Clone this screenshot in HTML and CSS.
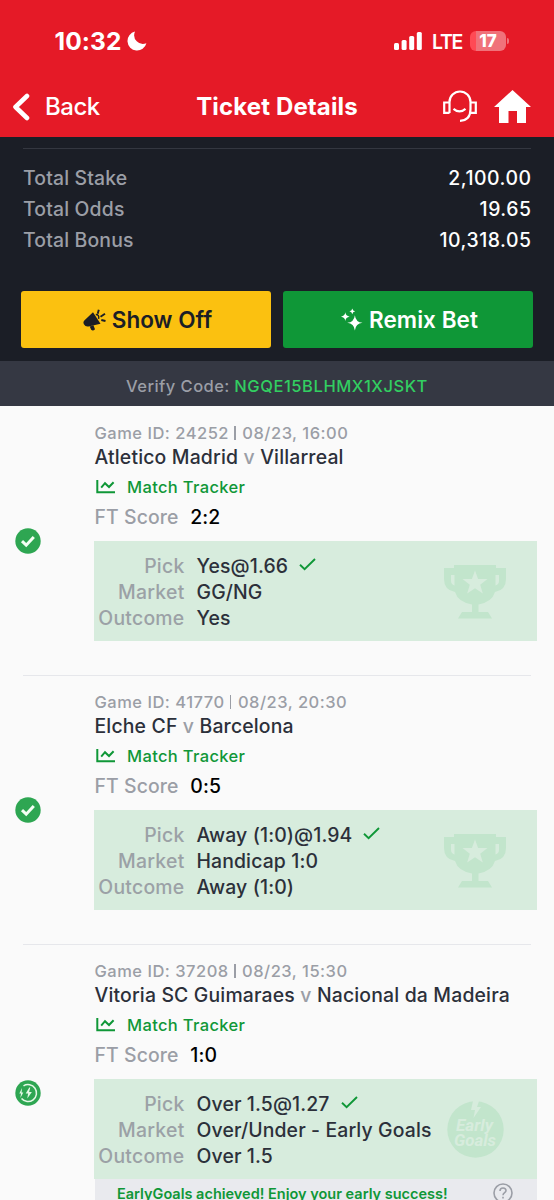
FILE: index.html
```html
<!DOCTYPE html>
<html lang="en">
<head>
<meta charset="utf-8">
<title>Ticket Details</title>
<link rel="stylesheet" href="styles.css">
</head>
<body>
<svg class="defs" aria-hidden="true">
  <symbol id="trophy" viewBox="0 0 62 54">
    <path fill-rule="evenodd" d="M10 0H52V3H62V14Q62 25 51 27Q48 37 34.500 39.500V47H44L48 53.500H14L18 47H28V39.500Q14 37 11 27Q0 25 0 14V3H10ZM7 10V16Q7 19 10.500 20.500V10ZM55 10H51.500V20.500Q55 19 55 16ZM31 5.500L27.900 14H18.500L25.800 19.700L23.200 28.500L31 23.300L38.800 28.500L36.200 19.700L43.500 14H34.100Z"/>
  </symbol>
  <symbol id="chart" viewBox="0 0 20 14">
    <path d="M1.300 0V12.300H19M5.200 7.600L9 3.200L13 7L17.600 2.200" fill="none" stroke="currentColor" stroke-width="2"/>
  </symbol>
  <symbol id="tick" viewBox="0 0 17 13">
    <path d="M1 6.800L5.600 11.200L16 1" fill="none" stroke="currentColor" stroke-width="1.900"/>
  </symbol>
  <symbol id="won" viewBox="0 0 26 26">
    <circle cx="13" cy="13" r="12.700" fill="#2ea652"/>
    <path d="M7 13.200L11.200 17.200L18.800 9" fill="none" stroke="#f4fff4" stroke-width="3"/>
  </symbol>
</svg>

<header class="header">
  <div class="status">
    <div class="clock"><span class="time">10:32</span>
      <svg class="moon" viewBox="0 0 20 20"><path d="M8 .6A9.600 9.600 0 1 0 19.400 12.300A8.800 8.800 0 0 1 8 .6Z" fill="#fff"/></svg>
    </div>
    <div class="signals">
      <svg class="bars" viewBox="0 0 28 18" fill="#fff"><rect y="11" width="5" height="7" rx="1.500"/><rect x="7.600" y="8" width="5" height="10" rx="1.500"/><rect x="15.200" y="4" width="5" height="14" rx="1.500"/><rect x="22.800" width="5" height="18" rx="1.500"/></svg>
      <span class="lte">LTE</span>
      <span class="battery">17</span><i class="nub"></i>
    </div>
  </div>
  <nav class="nav">
    <div class="back">
      <svg class="chevron" viewBox="0 0 18 28"><path d="M15 3L3.500 14L15 25" fill="none" stroke="#fff" stroke-width="4.600" stroke-linecap="round" stroke-linejoin="round"/></svg>
      <span class="back-text">Back</span>
    </div>
    <h1 class="title"><span>Ticket Details</span></h1>
    <div class="actions">
      <svg class="headset" viewBox="0 0 34 33" fill="none" stroke="#fff" stroke-width="2.200"><path d="M6.500 23V12A10.500 10.500 0 0 1 27.500 12V19C27.500 26 24 30.500 17 30.800M6.500 12.500H1.200V22.800H6.500M27.500 12.500H32.800V22.800H27.500M10.500 18.800Q16.500 24 22.500 18.800"/></svg>
      <svg class="home" viewBox="0 0 37 33"><path d="M18.500 0L37 17H32V33H23V21H14.500V33H5V17H0Z" fill="#fff"/></svg>
    </div>
  </nav>
</header>

<section class="summary">
  <dl class="totals">
    <div class="total"><dt>Total Stake</dt><dd>2,100.00</dd></div>
    <div class="total"><dt>Total Odds</dt><dd>19.65</dd></div>
    <div class="total"><dt>Total Bonus</dt><dd>10,318.05</dd></div>
  </dl>
  <div class="buttons">
    <button class="btn btn-show">
      <svg class="horn" viewBox="0 0 23 22" fill="#1b1e26"><path d="M10 3.200L17.500 14.700L5.500 17.400Q2.500 18 .9 15.300Q-.4 12.800 1.800 11ZM6.700 17.500L10.500 16.600L12 20.200Q10 22.600 8.200 20.800Z"/><path d="M14.700 4.800L15.800.8M17.500 7.800L22 4.800M18.300 11L22.500 12" fill="none" stroke="#1b1e26" stroke-width="1.900"/><path d="M12.800 5.500Q16.500 5.500 15.600 9.800" fill="none" stroke="#1b1e26" stroke-width="1.500"/></svg>
      <span>Show Off</span>
    </button>
    <button class="btn btn-remix">
      <svg class="sparkle" viewBox="0 0 23 23" fill="#fff"><path d="M14.500 7Q15.300 14.200 22.500 15Q15.300 15.800 14.500 23Q13.700 15.800 6.500 15Q13.700 14.200 14.500 7ZM4.500 4Q5 8 9 8.500Q5 9 4.500 13Q4 9 0 8.500Q4 8 4.500 4ZM11.800 0Q12.200 2.600 14.800 3Q12.200 3.400 11.800 6Q11.400 3.400 8.800 3Q11.400 2.600 11.800 0Z"/></svg>
      <span>Remix Bet</span>
    </button>
  </div>
</section>

<div class="verify"><span class="verify-label">Verify Code:</span><span class="verify-code">NGQE15BLHMX1XJSKT</span></div>

<main class="matches">
  <article class="match">
    <svg class="state"><use href="#won"/></svg>
    <div class="info">
      <p class="game">Game ID: 24252 <i class="bar"></i> 08/23, 16:00</p>
      <h2 class="teams">Atletico Madrid <span class="v">v</span> Villarreal</h2>
      <p class="tracker"><svg class="chart"><use href="#chart"/></svg>Match Tracker</p>
      <p class="score">FT Score <b>2:2</b></p>
      <div class="pick">
        <dl class="rows">
          <dt>Pick</dt><dd>Yes@1.66<svg class="tick"><use href="#tick"/></svg></dd>
          <dt>Market</dt><dd>GG/NG</dd>
          <dt>Outcome</dt><dd>Yes</dd>
        </dl>
        <svg class="trophy"><use href="#trophy"/></svg>
      </div>
    </div>
  </article>

  <article class="match">
    <svg class="state"><use href="#won"/></svg>
    <div class="info">
      <p class="game">Game ID: 41770 <i class="bar"></i> 08/23, 20:30</p>
      <h2 class="teams">Elche CF <span class="v">v</span> Barcelona</h2>
      <p class="tracker"><svg class="chart"><use href="#chart"/></svg>Match Tracker</p>
      <p class="score">FT Score <b>0:5</b></p>
      <div class="pick">
        <dl class="rows">
          <dt>Pick</dt><dd>Away (1:0)@1.94<svg class="tick"><use href="#tick"/></svg></dd>
          <dt>Market</dt><dd>Handicap 1:0</dd>
          <dt>Outcome</dt><dd>Away (1:0)</dd>
        </dl>
        <svg class="trophy"><use href="#trophy"/></svg>
      </div>
    </div>
  </article>

  <article class="match">
    <svg class="state state-early" viewBox="0 0 26 26">
      <circle cx="13" cy="13" r="12.700" fill="#2ea652"/>
      <path d="M8.500 5.900A8.500 8.500 0 1 1 6.500 18.600" fill="none" stroke="#e4f8e6" stroke-width="1.500"/>
      <path d="M14.300 7.500L10.700 13.600H13.100L12.300 18.500L16.900 11.900H14.100L15.300 7.500ZM7 8L4.300 13.600H6L5.400 18L8.300 12.500H6.600Z" fill="#e4f8e6"/>
    </svg>
    <div class="info">
      <p class="game">Game ID: 37208 <i class="bar"></i> 08/23, 15:30</p>
      <h2 class="teams">Vitoria SC Guimaraes <span class="v">v</span> Nacional da Madeira</h2>
      <p class="tracker"><svg class="chart"><use href="#chart"/></svg>Match Tracker</p>
      <p class="score">FT Score <b>1:0</b></p>
      <div class="pick">
        <dl class="rows">
          <dt>Pick</dt><dd>Over 1.5@1.27<svg class="tick"><use href="#tick"/></svg></dd>
          <dt>Market</dt><dd>Over/Under - Early Goals</dd>
          <dt>Outcome</dt><dd>Over 1.5</dd>
        </dl>
        <svg class="early" viewBox="0 0 57 57">
          <circle cx="28.500" cy="28.500" r="28.200" fill="#c2e5cc"/>
          <path d="M26 0L24 9H28L26.500 17L34 6H30L32 0Z" fill="#d7ecdd"/>
          <text x="9" y="29.500" class="early-text" textLength="37" lengthAdjust="spacingAndGlyphs">Early</text>
          <text x="7" y="45" class="early-text" textLength="42" lengthAdjust="spacingAndGlyphs">Goals</text>
        </svg>
      </div>
      <div class="notice"><span>EarlyGoals achieved! Enjoy your early success!</span>
        <svg class="help" viewBox="0 0 20 20" fill="none" stroke="#9b9ea6" stroke-width="1.600"><circle cx="10" cy="10" r="9"/><path d="M7 8Q7 5 10 5T13 7.800C13 9.700 10 9.800 10 12.200M10 13.800V15.600"/></svg>
      </div>
    </div>
  </article>
</main>
</body>
</html>
```
FILE: styles.css
```css
* { box-sizing: border-box; margin: 0; padding: 0; }
html, body { height: 1200px; overflow: hidden; }
body { font-family: Inter, "Liberation Sans", sans-serif; background: #fafafa; color: #2c303a; white-space: nowrap; font-weight: 500; }
svg { display: block; flex: none; }
.defs { width: 0; height: 0; position: absolute; }

.header { height: 137px; background: #e51a27; color: #fff; }
.status { height: 76px; padding: 26px 44px 0 54.500px; display: flex; justify-content: space-between; }
.clock, .signals { height: 30px; display: flex; align-items: center; }
.time { width: 68px; font-size: 24.500px; line-height: 28px; font-weight: 700; letter-spacing: 0.1px; }
.moon { width: 20px; height: 20px; margin: 0 0 0 4px; }
.bars { width: 28px; height: 18px; }
.lte { width: 30px; margin: 1px 8px 0 10px; font-size: 19.500px; font-weight: 600; letter-spacing: -1.300px; }
.battery { width: 36px; height: 20px; margin-right: 1px; border-radius: 6px; background: linear-gradient(90deg, #ff4a55 17%, #f0727a 17%); font-size: 17px; line-height: 20px; font-weight: 800; text-align: center; }
.nub { width: 2px; height: 6px; margin-right: 1px; border-radius: 0 2px 2px 0; background: #f0727a; }

.nav { height: 61px; display: grid; grid-template-columns: 1fr auto 1fr; align-items: center; padding: 0 23px 0 12px; }
.back { display: flex; align-items: center; gap: 15px; font-size: 24px; }
.back-text { letter-spacing: -0.5px; }
.chevron { width: 18px; height: 28px; }
.title { font-size: 24px; font-weight: 700; letter-spacing: 0.13px; padding-left: 11px; }
.actions { display: flex; justify-content: flex-end; align-items: center; gap: 17px; }
.headset { width: 34px; height: 33px; }
.home { width: 37px; height: 33px; }

.summary { height: 224px; background: #1b1e26; padding: 11px 21px 0; }
.totals { border-top: 1px solid #343740; margin: 0 2px; padding-top: 13px; font-size: 19.400px; }
.total { height: 31px; display: flex; justify-content: space-between; align-items: center; }
.total dt { color: #9b9ea6; letter-spacing: 0.16px; }
.total dd { color: #fff; letter-spacing: 0.52px; margin-right: -0.5px; }
.buttons { display: grid; grid-template-columns: 1fr 1fr; gap: 12px; margin-top: 36px; }
.btn { height: 57px; padding-left: 3px; border: 0; border-radius: 3px; display: flex; align-items: center; justify-content: center; gap: 6px; font: 600 22.500px Inter, sans-serif; letter-spacing: 0.05px; }
.btn-show { background: #fbc110; color: #1b1e26; }
.btn-remix { background: #0f9737; color: #fff; }
.horn { width: 23px; height: 22px; }
.sparkle { width: 22px; height: 23px; }

.verify { height: 45px; padding-top: 5px; background: #353843; display: flex; justify-content: center; align-items: center; gap: 4.500px; font-size: 16.500px; color: #9b9ea6; }
.verify-label { letter-spacing: 0.45px; }
.verify-code { color: #32ce61; letter-spacing: 0.55px; }

.match { position: relative; height: 269px; padding: 15px 17px 0 15px; display: grid; grid-template-columns: 79.500px 1fr; align-items: start; }
.match + .match::before { content: ""; position: absolute; left: 23px; right: 23px; top: 0; height: 1px; background: #e6e7eb; }
.state { width: 26px; height: 26px; margin-top: 107px; }
.state-early { margin-top: 121px; }
.game { height: 24px; line-height: 24px; font-size: 16.500px; color: #9b9ea6; letter-spacing: 0.5px; }
.bar { display: inline-block; width: 1.500px; height: 14px; margin: 0 1.500px 0 0.500px; background: #9b9ea6; vertical-align: -1px; }
.teams { height: 26px; line-height: 24.500px; font-size: 19.400px; font-weight: 500; letter-spacing: 0.17px; }
.v { color: #9b9ea6; }
.tracker { height: 24px; margin-top: 4px; display: flex; align-items: center; gap: 11px; font-size: 16.500px; color: #0f9737; padding-left: 1.500px; letter-spacing: 0.35px; }
.chart { width: 20px; height: 14px; }
.score { height: 24px; margin: 6px 0 12px; line-height: 25px; font-size: 19.400px; color: #9b9ea6; letter-spacing: 0.1px; }
.score b { color: #000; font-weight: 500; margin-left: 6.500px; }
.pick { height: 100px; margin-left: -0.500px; background: #d7ecdd; display: flex; justify-content: space-between; padding: 12px 31px 0 0; }
.rows { display: grid; grid-template-columns: 90.500px auto; grid-auto-rows: 26px; align-content: start; column-gap: 12px; line-height: 26px; font-size: 19.400px; letter-spacing: 0.13px; }
.rows dt { text-align: right; color: #9ba1a6; letter-spacing: 0.25px; }
.rows dd { display: flex; }
.tick { width: 17px; height: 13px; margin: 5px 0 0 11px; color: #0f9737; }
.trophy { width: 62px; height: 54px; margin-top: 12px; fill: #c2e5cc; }
.early { width: 57px; height: 57px; margin: 10px 2px 0 0; }
.early-text { font: italic 700 16px/1 Roboto, sans-serif; fill: #d7ecdd; letter-spacing: 0; }
.notice { height: 30px; background: #e9eaee; display: flex; justify-content: space-between; padding: 4px 24px 0 22.500px; line-height: 22px; font-size: 14.500px; font-weight: 600; color: #0f9737; }
.help { width: 20px; height: 20px; }
```
